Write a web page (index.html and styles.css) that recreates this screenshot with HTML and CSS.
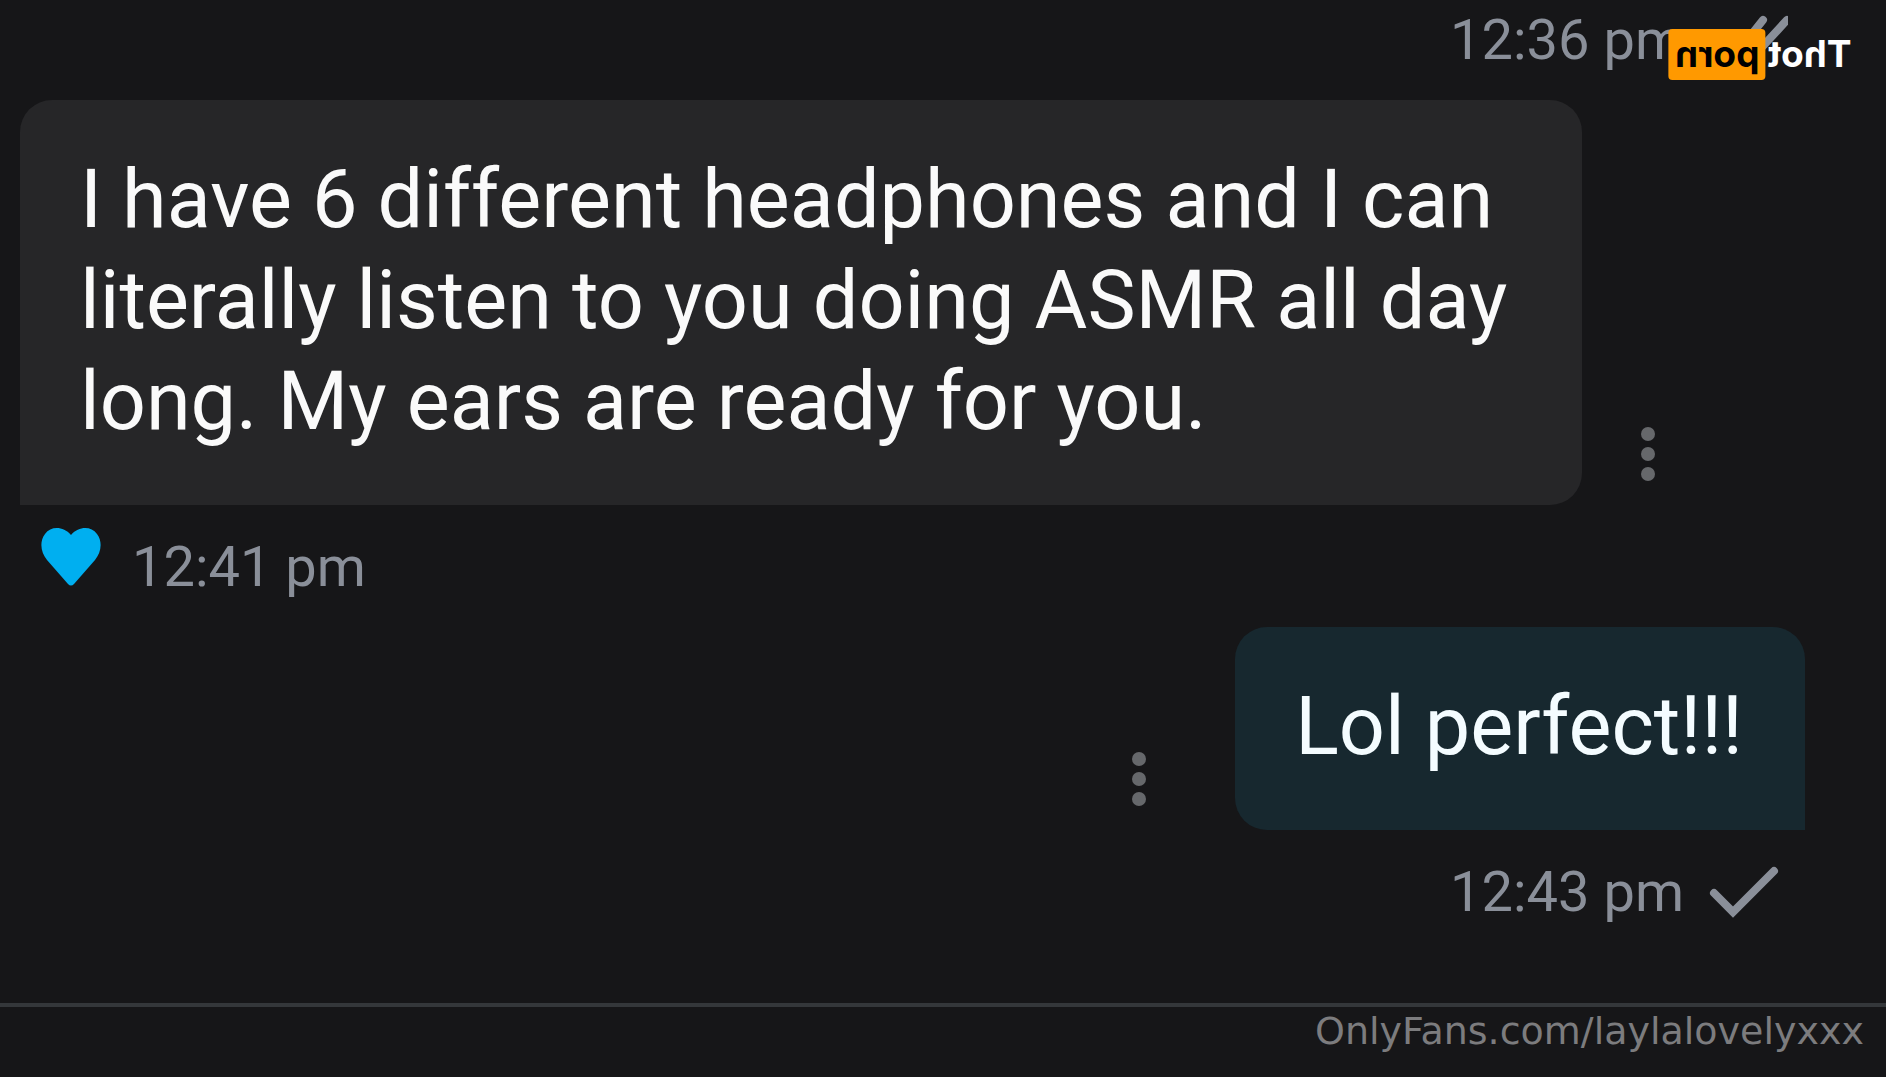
FILE: index.html
```html
<!DOCTYPE html>
<html lang="en">
<head>
    <meta charset="UTF-8">
    <meta name="viewport" content="width=device-width, initial-scale=1.0">
    <title>Messages</title>
    <link rel="stylesheet" href="styles.css">
</head>
<body>
    <div class="brand"><span class="brand-name">Thot</span><span class="brand-tag">porn</span></div>

    <main class="chat">
        <div class="meta sent">
            <time>12:36 pm</time>
            <svg class="check" viewBox="0 0 80 56" role="img" aria-label="Read">
                <path d="M5 28 L24 47 L55 8 M40 43 L43 47 L79 8"/>
            </svg>
        </div>

        <div class="message">
            <p class="bubble">I have 6 different headphones and I can literally listen to you doing ASMR all day long. My ears are ready for you.</p>
            <button class="more" type="button" aria-label="More options"><i></i><i></i><i></i></button>
        </div>
        <div class="meta">
            <svg class="heart" viewBox="0 0 60 58" role="img" aria-label="Liked">
                <path d="M30 7 C38 -2 50 -2 56 6 C62 14 60 25 54 32 L33 56 Q30 59 27 56 L6 32 C0 25 -2 14 4 6 C10 -2 22 -2 30 7 Z"/>
            </svg>
            <time>12:41 pm</time>
        </div>

        <div class="message sent">
            <p class="bubble">Lol perfect!!!</p>
            <button class="more" type="button" aria-label="More options"><i></i><i></i><i></i></button>
        </div>
        <div class="meta sent">
            <time>12:43 pm</time>
            <svg class="check" viewBox="0 0 80 56" role="img" aria-label="Sent">
                <path d="M6 29 L25 48 L66 7"/>
            </svg>
        </div>
    </main>

    <footer class="footer">OnlyFans.com/laylalovelyxxx</footer>
</body>
</html>
```
FILE: styles.css
```css
* {
    box-sizing: border-box;
}

body {
    margin: 0;
    min-height: 100vh;
    display: flex;
    flex-direction: column;
    position: relative;
    background-color: #161618;
    font-family: Roboto, sans-serif;
}

.chat {
    flex: 1;
    padding: 8px 81px 0 20px;
}

.message {
    display: flex;
    align-items: flex-end;
    gap: 52px;
    margin-top: 28px;
}

.message.sent {
    flex-direction: row-reverse;
    gap: 82px;
}

.bubble {
    max-width: 1562px;
    margin: 0;
    padding: 49px 62px 53px 60px;
    border-radius: 32px 32px 32px 0;
    background-color: #262628;
    color: #fafafa;
    font-size: 81px;
    line-height: 101px;
}

.sent .bubble {
    border-radius: 32px 32px 0 32px;
    background-color: #17282f;
    color: #f4fcff;
}

.more {
    display: flex;
    flex-direction: column;
    gap: 6px;
    margin-bottom: 17px;
    padding: 7px;
    border: none;
    background: none;
    cursor: pointer;
}

.more i {
    width: 14px;
    height: 14px;
    border-radius: 50%;
    background-color: #66686b;
}

.meta {
    display: flex;
    align-items: center;
    gap: 31px;
    margin-top: 30px;
    padding-left: 21px;
    color: #8a8f99;
    font-size: 56px;
    line-height: 64px;
}

.meta.sent {
    justify-content: flex-end;
    gap: 24px;
    padding: 0 17px 0 0;
}

.meta:first-child {
    margin-top: 0;
}

.check {
    width: 80px;
    height: 56px;
    fill: none;
    stroke: #8a8f99;
    stroke-width: 8;
    stroke-linecap: round;
}

.heart {
    align-self: flex-start;
    width: 60px;
    height: 58px;
    margin-top: -7px;
    fill: #00aff0;
}

/* mirrored logo */
.brand {
    position: absolute;
    top: 29px;
    right: 35px;
    display: flex;
    align-items: center;
    gap: 2px;
    transform: scaleX(-1);
    font-family: Inter, sans-serif;
    font-size: 37px;
    font-weight: 700;
    line-height: 49px;
}

.brand-name,
.brand-tag {
    padding-bottom: 2px;
}

.brand-name {
    color: #fff;
}

.brand-tag {
    padding-left: 6px;
    padding-right: 7px;
    border-radius: 4px;
    background-color: #ff9900;
    color: #000;
}

.footer {
    height: 74px;
    padding-right: 22px;
    border-top: 4px solid #34373a;
    color: #7c7c7e;
    font-family: "DejaVu Sans", sans-serif;
    font-size: 38px;
    line-height: 48px;
    text-align: right;
}
```
